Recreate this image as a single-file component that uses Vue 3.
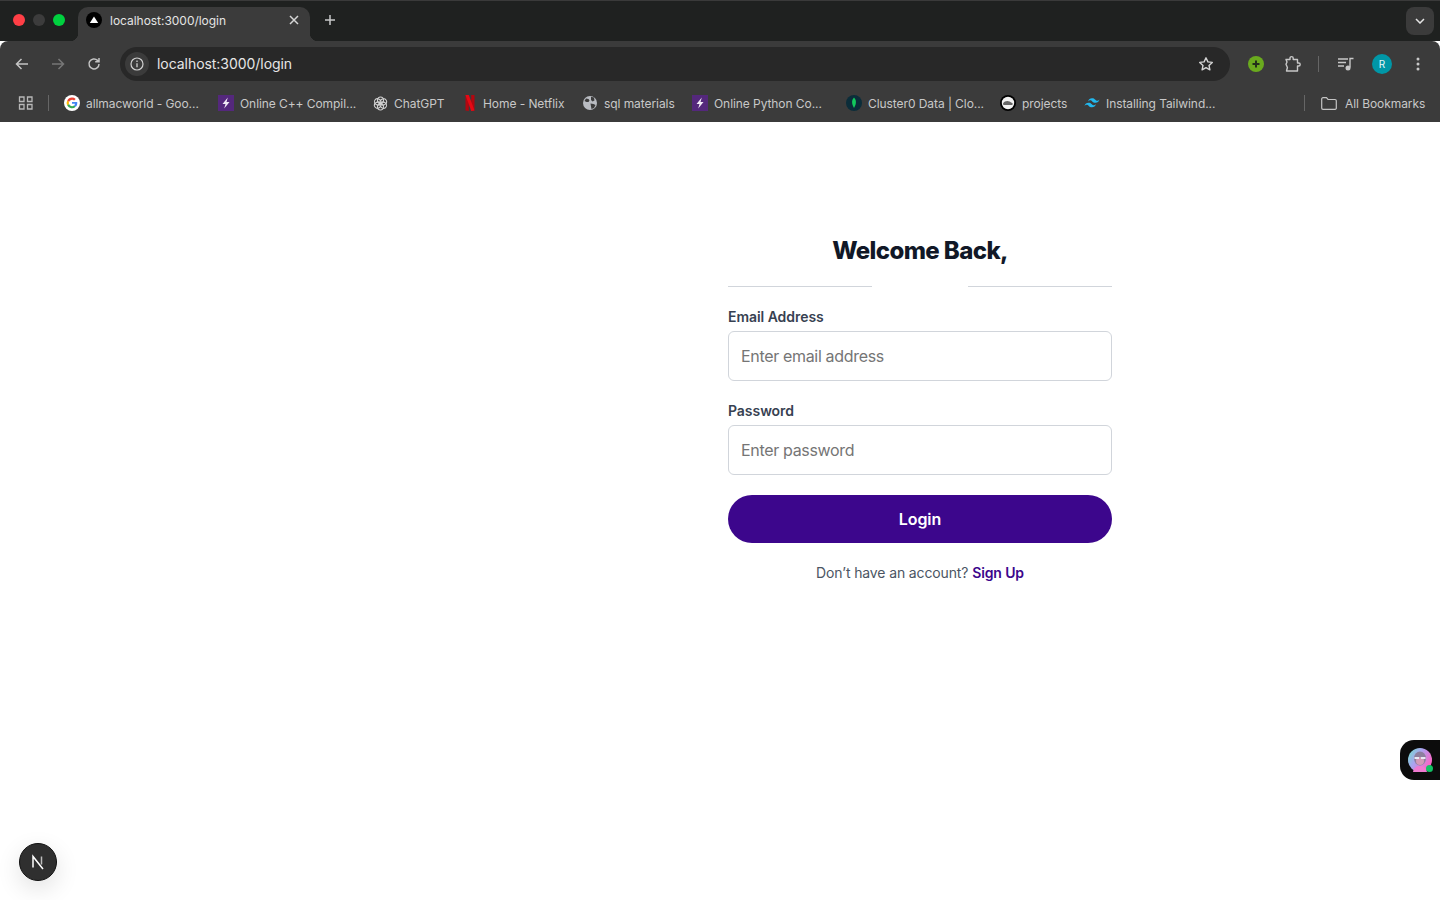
<template>
  <div class="page">
    <!-- Tab strip -->
    <div class="tab-strip">
      <div class="traffic">
        <span class="light red"></span>
        <span class="light grey"></span>
        <span class="light green"></span>
      </div>
      <div class="tab">
        <svg class="favicon" width="16" height="16" viewBox="0 0 16 16">
          <circle cx="8" cy="8" r="8" fill="#000" />
          <path d="M8 4.400 12.200 11H3.800z" fill="#fff" />
        </svg>
        <span class="tab-title">localhost:3000/login</span>
        <svg class="tab-close" width="10" height="10" viewBox="0 0 10 10">
          <path d="M1 1l8 8M9 1l-8 8" stroke="#d6d6d6" stroke-width="1.500" fill="none" />
        </svg>
      </div>
      <svg class="new-tab" width="12" height="12" viewBox="0 0 12 12">
        <path d="M6 1v10M1 6h10" stroke="#c8c8c8" stroke-width="1.500" fill="none" />
      </svg>
      <div class="tab-menu">
        <svg width="10" height="6" viewBox="0 0 10 6">
          <path d="M1 1l4 4 4-4" stroke="#e4e4e4" stroke-width="1.500" fill="none" />
        </svg>
      </div>
    </div>

    <!-- Toolbar -->
    <div class="toolbar">
      <div class="nav-btns">
        <svg width="16" height="16" viewBox="0 0 16 16">
          <path d="M14 8H3M7.500 3 2.500 8l5 5" stroke="#c4c4c4" stroke-width="1.500" fill="none" />
        </svg>
        <svg width="16" height="16" viewBox="0 0 16 16">
          <path d="M2 8h11M8.500 3l5 5-5 5" stroke="#777" stroke-width="1.500" fill="none" />
        </svg>
        <svg width="16" height="16" viewBox="0 0 16 16">
          <path d="M13 8a5 5 0 1 1-1.500-3.600L13 5.800M13 2v3.800H9.200" stroke="#c4c4c4" stroke-width="1.500" fill="none" />
        </svg>
      </div>
      <div class="omnibox">
        <span class="site-info">
          <svg width="14" height="14" viewBox="0 0 14 14">
            <circle cx="7" cy="7" r="6" stroke="#d0d0d0" stroke-width="1.200" fill="none" />
            <path d="M7 6.200v4M7 3.600v1.300" stroke="#d0d0d0" stroke-width="1.300" fill="none" />
          </svg>
        </span>
        <span class="url">localhost:3000/login</span>
        <svg class="star" width="16" height="16" viewBox="0 0 16 16">
          <path d="M8 1.800l1.900 4.100 4.400.5-3.300 3 .9 4.400L8 11.600l-3.900 2.200.9-4.400-3.300-3 4.400-.5z" stroke="#d4d4d4" stroke-width="1.400" fill="none" stroke-linejoin="round" />
        </svg>
      </div>
      <div class="tool-icons">
        <svg width="16" height="16" viewBox="0 0 16 16">
          <circle cx="8" cy="8" r="8" fill="#6aaa1e" />
          <path d="M8 4.500v7M4.500 8h7" stroke="#22301a" stroke-width="2" fill="none" />
        </svg>
        <svg class="puzzle" width="18" height="18" viewBox="0 0 18 18">
          <path d="M2 4.500h4V3.200a1.600 1.600 0 0 1 3.200 0v1.300h4.300V8h1.200a1.500 1.500 0 0 1 0 3h-1.200v5H2.500l.9-3.500L2 9.200l1-2.200z" stroke="#c8c8c8" stroke-width="1.400" fill="none" stroke-linejoin="round" />
        </svg>
        <span class="tool-sep"></span>
        <svg class="queue" width="16" height="14" viewBox="0 0 16 14">
          <path d="M0 2h10M0 5.500h8M0 9h6" stroke="#c8c8c8" stroke-width="1.400" fill="none" />
          <path d="M12 10.500V1.500h3.500" stroke="#c8c8c8" stroke-width="1.400" fill="none" />
          <circle cx="10" cy="11" r="2.500" fill="#c8c8c8" />
        </svg>
        <span class="avatar">R</span>
        <svg class="dots" width="4" height="14" viewBox="0 0 4 14">
          <circle cx="2" cy="2" r="1.500" fill="#c8c8c8" />
          <circle cx="2" cy="7" r="1.500" fill="#c8c8c8" />
          <circle cx="2" cy="12" r="1.500" fill="#c8c8c8" />
        </svg>
      </div>
    </div>

    <!-- Bookmarks bar -->
    <div class="bookmarks">
      <div class="apps">
        <svg width="16" height="14" viewBox="0 0 16 14">
          <path d="M1.500 1h4.500v4.500H1.500zM9.500 1H14v4.500H9.500zM1.500 8.500h4.500V13H1.500zM9.500 8.500H14V13H9.500z" stroke="#b8b8b8" stroke-width="1.300" fill="none" />
        </svg>
        <span class="bm-sep"></span>
      </div>
      <div class="bm-list">
        <div class="bm">
          <svg width="16" height="16" viewBox="0 0 16 16">
            <circle cx="8" cy="8" r="8" fill="#fff" />
            <path d="M8 2.600a5.400 5.400 0 0 1 3.700 1.450L10.100 5.600A3.200 3.200 0 0 0 5 6.900L3.200 5.500A5.400 5.400 0 0 1 8 2.600z" fill="#ea4335" />
            <path d="M3.200 5.500 5 6.900a3.200 3.200 0 0 0 0 2.200l-1.800 1.400a5.400 5.400 0 0 1 0-5z" fill="#fbbc05" />
            <path d="M3.200 10.500 5 9.100a3.200 3.200 0 0 0 5 1.300l1.700 1.400A5.400 5.400 0 0 1 3.200 10.500z" fill="#34a853" />
            <path d="M8 6.900h5.200c.3 1.900-.2 3.700-1.500 4.900L10 10.400c.5-.4.900-.9 1-1.600H8z" fill="#4285f4" />
          </svg>
          <span>allmacworld - Goo...</span>
        </div>
        <div class="bm">
          <svg width="16" height="16" viewBox="0 0 16 16">
            <rect width="16" height="16" fill="#54287c" />
            <path d="M9.800 2.500 4.500 9h3l-1.300 4.500L11.500 7h-3z" fill="#f1eaf6" />
          </svg>
          <span>Online C++ Compil...</span>
        </div>
        <div class="bm">
          <svg width="15" height="15" viewBox="0 0 16 16">
            <g stroke="#d4d4d4" stroke-width="1.100" fill="none">
              <ellipse cx="8" cy="4.500" rx="3.200" ry="3.500" />
              <ellipse cx="8" cy="4.500" rx="3.200" ry="3.500" transform="rotate(60 8 8)" />
              <ellipse cx="8" cy="4.500" rx="3.200" ry="3.500" transform="rotate(120 8 8)" />
              <ellipse cx="8" cy="4.500" rx="3.200" ry="3.500" transform="rotate(180 8 8)" />
              <ellipse cx="8" cy="4.500" rx="3.200" ry="3.500" transform="rotate(240 8 8)" />
              <ellipse cx="8" cy="4.500" rx="3.200" ry="3.500" transform="rotate(300 8 8)" />
            </g>
          </svg>
          <span>ChatGPT</span>
        </div>
        <div class="bm">
          <svg width="14" height="16" viewBox="0 0 14 16">
            <path d="M2.500 0h3.300v16l-3.300-.4zM8.200 0h3.300v15.600l-3.300.4z" fill="#b20710" />
            <path d="M2.500 0h3.300l5.700 15.600-3.300.4z" fill="#e50914" />
          </svg>
          <span>Home - Netflix</span>
        </div>
        <div class="bm bm-sql">
          <svg width="14" height="14" viewBox="0 0 14 14">
            <circle cx="7" cy="7" r="7" fill="#b9bcc2" />
            <path d="M3 2.500l2.500.5 1 1.500-1 1.500H3.500L1.500 5zM8 .8l3 .7.5 3L9.500 5.500 8 4zM7.500 7.500l3 .5 2 1-1.500 3-2.500 1L8 10.500z" fill="#3b3b3b" />
          </svg>
          <span>sql materials</span>
        </div>
        <div class="bm">
          <svg width="16" height="16" viewBox="0 0 16 16">
            <rect width="16" height="16" fill="#54287c" />
            <path d="M9.800 2.500 4.500 9h3l-1.300 4.500L11.500 7h-3z" fill="#f1eaf6" />
          </svg>
          <span>Online Python Co...</span>
        </div>
        <div class="bm">
          <svg width="16" height="16" viewBox="0 0 16 16">
            <circle cx="8" cy="8" r="8" fill="#0b2d3a" />
            <path d="M8 2.500c2.300 2.200 2.800 5.800 0 10.500-2.800-4.700-2.300-8.300 0-10.500z" fill="#12c95c" />
          </svg>
          <span>Cluster0 Data | Clo...</span>
        </div>
        <div class="bm">
          <svg width="16" height="16" viewBox="0 0 16 16">
            <circle cx="8" cy="8" r="8" fill="#000" />
            <circle cx="8" cy="8" r="6.200" fill="#f2f2f2" />
            <path d="M3 8.400c1.600-2.500 4.500-3 6.600-1.900 1 .6 2.300 1.200 3.200 1.900l-.5 1.500H3.400z" fill="#666" />
          </svg>
          <span>projects</span>
        </div>
        <div class="bm">
          <svg width="16" height="10" viewBox="0 0 16 10">
            <path d="M4 3.500C4.700 1.200 6 .2 8 .2c3 0 3.300 2.200 4.800 2.600 1 .2 1.900-.2 2.700-1.300-.7 2.300-2 3.300-4 3.300-3 0-3.300-2.200-4.800-2.600-1-.2-1.900.2-2.700 1.300zM.5 8C1.200 5.700 2.500 4.700 4.500 4.700c3 0 3.300 2.200 4.800 2.600 1 .2 1.900-.2 2.700-1.300-.7 2.300-2 3.300-4 3.300-3 0-3.300-2.200-4.800-2.600-1-.2-1.900.2-2.700 1.300z" fill="#22b8ee" />
          </svg>
          <span>Installing Tailwind...</span>
        </div>
      </div>
      <div class="all-bookmarks">
        <span class="bm-sep"></span>
        <svg width="16" height="13" viewBox="0 0 16 13">
          <path d="M.700 2a1.300 1.300 0 0 1 1.300-1.300h3.500L7 2.500h7a1.300 1.300 0 0 1 1.300 1.300v7A1.300 1.300 0 0 1 14 12.300H2A1.300 1.300 0 0 1 .700 11z" stroke="#c4c4c4" stroke-width="1.200" fill="none" />
        </svg>
        <span>All Bookmarks</span>
      </div>
    </div>

    <!-- Login form -->
    <main class="content">
      <form class="login-form" @submit.prevent>
        <h1>Welcome Back,</h1>
        <div class="divider">
          <span></span>
          <span></span>
        </div>
        <label for="email">Email Address</label>
        <input id="email" type="email" placeholder="Enter email address" />
        <label for="password" class="second">Password</label>
        <input id="password" type="password" placeholder="Enter password" />
        <button type="submit">Login</button>
        <p class="signup">Don’t have an account? <a href="#">Sign Up</a></p>
      </form>
    </main>

    <!-- Floating widgets -->
    <div class="side-widget">
      <span class="side-avatar">
        <svg width="24" height="24" viewBox="0 0 24 24">
          <defs>
            <linearGradient id="face" x1="0" y1="0" x2="1" y2="0.600">
              <stop offset="0" stop-color="#6fe3c8" />
              <stop offset="0.450" stop-color="#a8a4f0" />
              <stop offset="1" stop-color="#ff62c4" />
            </linearGradient>
          </defs>
          <circle cx="12" cy="12" r="12" fill="url(#face)" />
          <ellipse cx="12" cy="10.500" rx="6" ry="7" fill="#8d7f9e" />
          <ellipse cx="12" cy="13" rx="4" ry="4" fill="#d49ab8" />
          <path d="M6.500 10h4.500M13 10h4.500" stroke="#e8e8f4" stroke-width="2" />
          <path d="M5 24c1-5 4-6 7-6s6 1 7 6z" fill="#f07ad0" />
        </svg>
        <i class="online"></i>
      </span>
    </div>
    <div class="next-badge">
      <svg width="16" height="16" viewBox="0 0 16 16">
        <path d="M3 13.500V2.500L13 15" stroke="#fff" stroke-width="1.500" fill="none" />
        <path d="M11.500 2.500v8" stroke="#bdbdbd" stroke-width="1.500" fill="none" />
      </svg>
    </div>
  </div>
</template>

<script setup>
</script>

<style>
html,
body {
  margin: 0;
  background: #fff;
  overflow: hidden;
}
</style>

<style scoped>
.page {
  position: relative;
  width: 1440px;
  height: 900px;
  overflow: hidden;
  font-family: Inter, "Liberation Sans", sans-serif;
  background: #fff;
}

/* Tab strip */
.tab-strip {
  height: 41px;
  box-sizing: border-box;
  background: #1f2120;
  border-top: 1px solid #3a3a3a;
  display: flex;
  align-items: flex-end;
}

.traffic {
  display: flex;
  gap: 8px;
  width: 65px;
  padding-left: 13px;
  align-self: flex-start;
  margin-top: 13px;
}

.light {
  width: 12px;
  height: 12px;
  border-radius: 50%;
}

.red { background: #ff3f46; }
.grey { background: #3c3c3c; }
.green { background: #00d13f; }

.tab {
  position: relative;
  width: 232px;
  height: 34px;
  box-sizing: border-box;
  padding: 0 11px 8px 8px;
  background: #3b3b3b;
  border-radius: 10px 10px 0 0;
  display: flex;
  align-items: center;
  color: #e4e4e4;
  font-size: 12px;
  letter-spacing: -0.03px;
}

.tab::before,
.tab::after {
  content: "";
  position: absolute;
  bottom: 0;
  width: 8px;
  height: 8px;
}

.tab::before {
  left: -8px;
  background: radial-gradient(circle at 0 0, transparent 8px, #3b3b3b 8.500px);
}

.tab::after {
  right: -8px;
  background: radial-gradient(circle at 100% 0, transparent 8px, #3b3b3b 8.500px);
}

.tab-title {
  margin-left: 8px;
  flex: 1;
}

.new-tab {
  margin: 0 0 15px 14px;
}

.tab-menu {
  margin: 0 6px 6px auto;
  width: 28px;
  height: 28px;
  background: #3b3b3b;
  border-radius: 8px;
  display: flex;
  align-items: center;
  justify-content: center;
}

/* Toolbar */
.toolbar {
  height: 44px;
  background: #3b3b3b;
  border-radius: 8px 8px 0 0;
  display: flex;
  align-items: center;
  padding-top: 2px;
  box-sizing: border-box;
}

.nav-btns {
  width: 120px;
  box-sizing: border-box;
  padding-left: 14px;
  padding-right: 18px;
  display: flex;
  justify-content: space-between;
}

.omnibox {
  width: 1110px;
  height: 34px;
  box-sizing: border-box;
  background: #282828;
  border-radius: 17px;
  display: flex;
  align-items: center;
  padding: 0 16px 0 5px;
}

.site-info {
  width: 24px;
  height: 24px;
  border-radius: 50%;
  background: #3b3b3b;
  display: flex;
  align-items: center;
  justify-content: center;
}

.url {
  margin: 0 0 2px 8px;
  flex: 1;
  color: #e6e6e6;
  font-size: 14px;
  letter-spacing: -0.05px;
}

.tool-icons {
  flex: 1;
  display: flex;
  align-items: center;
  padding-left: 18px;
}

.puzzle { margin-left: 20px; }

.tool-sep {
  width: 1px;
  height: 16px;
  background: #666;
  margin-left: 16px;
}

.queue { margin-left: 19px; }

.avatar {
  width: 20px;
  height: 20px;
  margin-left: 18px;
  border-radius: 50%;
  background: #0097a7;
  color: #e8f8fa;
  font-size: 10px;
  display: flex;
  align-items: center;
  justify-content: center;
}

.dots { margin-left: 24px; }

/* Bookmarks */
.bookmarks {
  height: 37px;
  background: #3b3b3b;
  display: flex;
  align-items: center;
  color: #c8c8c8;
  font-size: 12px;
  letter-spacing: -0.07px;
  padding-bottom: 1px;
  box-sizing: border-box;
}

.apps {
  width: 64px;
  box-sizing: border-box;
  padding-left: 18px;
  display: flex;
  align-items: center;
  gap: 14px;
}

.bm-sep {
  width: 1px;
  height: 16px;
  background: #666;
}

.bm-list {
  display: grid;
  grid-template-columns: 154px 155px 90px 120px 109px 154px 154px 84px 200px;
}

.bm {
  display: flex;
  align-items: center;
  gap: 6px;
  white-space: nowrap;
}

.bm-sql {
  gap: 7px;
}

.all-bookmarks {
  position: absolute;
  top: 85px;
  left: 1304px;
  height: 36px;
  display: flex;
  align-items: center;
}

.all-bookmarks svg {
  margin: 0 8px 0 16px;
}

/* Login form */
.content {
  padding: 113px 0 0 728px;
}

.login-form {
  width: 384px;
  display: flex;
  flex-direction: column;
}

h1 {
  margin: 0;
  font-size: 24px;
  line-height: 32px;
  font-weight: 800;
  letter-spacing: -0.6px;
  color: #111827;
  text-align: center;
}

.divider {
  display: flex;
  justify-content: space-between;
  margin: 19px 0 20px;
}

.divider span {
  width: 144px;
  height: 1px;
  background: #d1d5db;
}

label {
  font-size: 14px;
  line-height: 20px;
  font-weight: 600;
  letter-spacing: -0.05px;
  color: #374151;
  margin-bottom: 4px;
}

label.second {
  margin-top: 20px;
}

input {
  height: 50px;
  box-sizing: border-box;
  padding: 0 12px;
  border: 1px solid #d1d5db;
  border-radius: 6px;
  background: #fff;
  font-family: inherit;
  font-size: 16px;
  letter-spacing: -0.33px;
  outline: none;
}

input::placeholder {
  color: #757575;
}

button {
  margin-top: 20px;
  height: 48px;
  border: none;
  border-radius: 24px;
  background: #3c068c;
  color: #fff;
  font-family: inherit;
  font-size: 16px;
  font-weight: 600;
  letter-spacing: -0.1px;
}

.signup {
  margin: 20px 0 0;
  text-align: center;
  font-size: 14px;
  line-height: 20px;
  letter-spacing: -0.13px;
  color: #4b5563;
}

.signup a {
  color: #3c068c;
  font-weight: 600;
  text-decoration: none;
}

/* Floating */
.side-widget {
  position: absolute;
  right: 0;
  top: 740px;
  width: 40px;
  height: 40px;
  background: #0c0c0c;
  border-radius: 14px 0 0 14px;
  display: flex;
  align-items: center;
  justify-content: center;
}

.side-avatar {
  position: relative;
  width: 24px;
  height: 24px;
}

.side-avatar svg {
  display: block;
}

.online {
  position: absolute;
  right: -1px;
  bottom: 0;
  width: 7px;
  height: 7px;
  border-radius: 50%;
  background: #12c264;
}

.next-badge {
  position: absolute;
  left: 19px;
  top: 843px;
  width: 38px;
  height: 38px;
  box-sizing: border-box;
  border-radius: 50%;
  background: #2f2f2f;
  border: 1px solid #111;
  box-shadow: 0 8px 24px rgba(0, 0, 0, 0.12);
  display: flex;
  align-items: center;
  justify-content: center;
}
</style>
